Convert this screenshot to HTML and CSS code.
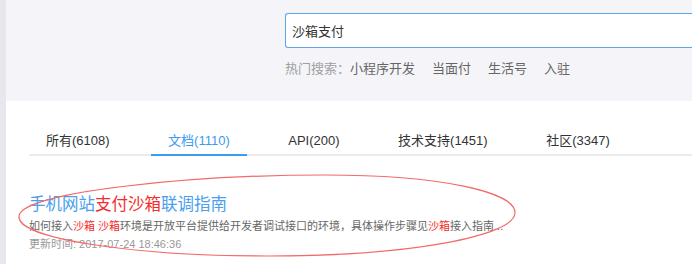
FILE: index.html
```html
<!DOCTYPE html>
<html lang="zh">
<head>
<meta charset="utf-8">
<title>沙箱支付 - 搜索</title>
<link rel="stylesheet" href="styles.css">
</head>
<body>
<div class="page">
  <div class="side"></div>
  <div class="main">
    <div class="header">
      <div class="search"><span class="query">沙箱支付</span></div>
      <div class="hot">
        <span class="hot-label">热门搜索：</span>
        <span class="hot-item">小程序开发</span>
        <span class="hot-item">当面付</span>
        <span class="hot-item">生活号</span>
        <span class="hot-item">入驻</span>
      </div>
    </div>
    <div class="content">
      <div class="tabs">
        <div class="tab">所有(6108)</div>
        <div class="tab active">文档(1110)</div>
        <div class="tab">API(200)</div>
        <div class="tab">技术支持(1451)</div>
        <div class="tab">社区(3347)</div>
      </div>
      <div class="result">
        <div class="title">手机网站<em>支付沙箱</em>联调指南</div>
        <div class="desc">如何接入<em>沙箱</em> <em>沙箱</em>环境是开放平台提供给开发者调试接口的环境，具体操作步骤见<em>沙箱</em>接入指南...</div>
        <div class="date">更新时间: 2017-07-24 18:46:36</div>
      </div>
    </div>
  </div>
  <svg class="mark" width="692" height="264" viewBox="0 0 692 264">
    <path d="M 19 216 C 22 192 190 175 325 175 C 440 175 516 192 515 213 C 514 236 410 256 268 256 C 130 256 16 238 19 216 Z" fill="none" stroke="#f26a6a" stroke-width="1.2"/>
  </svg>
</div>
</body>
</html>
```

FILE: styles.css
```css
html, body {
  margin: 0;
  padding: 0;
  background: #ffffff;
}
body {
  font-family: "Liberation Sans", "Noto Sans CJK SC", sans-serif;
  color: #333;
  overflow: hidden;
}
.page {
  position: relative;
  display: flex;
  width: 692px;
  height: 264px;
}
.side {
  width: 6px;
  flex: none;
  background: #e7e7ed;
}
.main {
  flex: 1;
  min-width: 0;
}
.header {
  height: 101px;
  box-sizing: border-box;
  background: #f5f5f9;
  padding: 13px 0 0 279px;
}
.search {
  height: 35px;
  box-sizing: border-box;
  border: 1px solid #5ea5e8;
  border-right: none;
  border-radius: 3px 0 0 3px;
  background: #fff;
  display: flex;
  align-items: center;
  padding-left: 6px;
  font-size: 13px;
  color: #333;
}
.hot {
  margin-top: 12px;
  display: flex;
  gap: 17px;
  font-size: 13px;
  line-height: 18px;
  color: #666;
}
.hot-label {
  color: #a0a0a0;
  margin-right: -17px;
}
.content {
  padding-left: 23px;
}
.tabs {
  margin-top: 31px;
  display: flex;
  gap: 24.5px;
  border-bottom: 2px solid #ebebeb;
}
.tab {
  padding: 0 17px 4px;
  font-size: 13px;
  line-height: 18px;
  color: #333;
  margin-bottom: -2px;
  border-bottom: 2px solid transparent;
}
.tab.active {
  color: #3a9cec;
  border-bottom-color: #3a9cec;
}
.result {
  margin-top: 37px;
}
.result em {
  font-style: normal;
  color: #f42c2c;
}
.title {
  font-size: 16.5px;
  line-height: 22px;
  color: #4aa0ee;
}
.desc {
  margin-top: 3px;
  font-size: 11px;
  line-height: 16px;
  color: #666;
  white-space: nowrap;
}
.date {
  margin-top: 2px;
  font-size: 11px;
  line-height: 16px;
  color: #999;
}
.mark {
  position: absolute;
  left: 0;
  top: 0;
  pointer-events: none;
}
```
